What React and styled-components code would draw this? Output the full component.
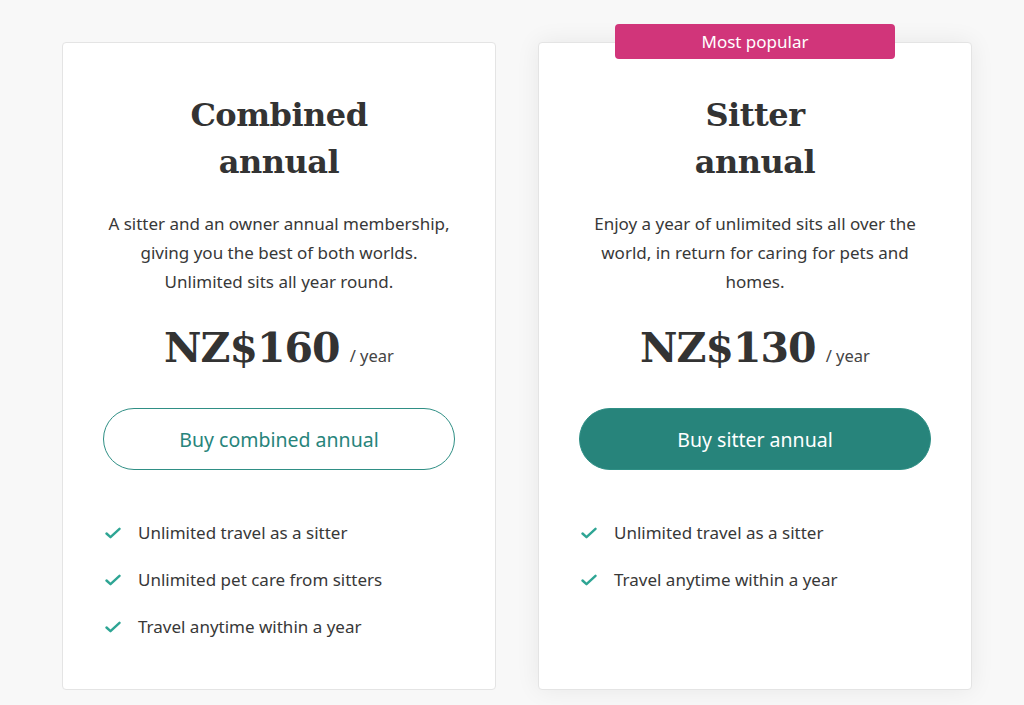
import React from 'react';
import styled, { createGlobalStyle } from 'styled-components';

const plans = [
  {
    title: ['Combined', 'annual'],
    description: ['A sitter and an owner annual membership,', 'giving you the best of both worlds.', 'Unlimited sits all year round.'],
    price: 'NZ$160',
    cta: 'Buy combined annual',
    features: ['Unlimited travel as a sitter', 'Unlimited pet care from sitters', 'Travel anytime within a year'],
  },
  {
    title: ['Sitter', 'annual'],
    description: ['Enjoy a year of unlimited sits all over the', 'world, in return for caring for pets and', 'homes.'],
    price: 'NZ$130',
    cta: 'Buy sitter annual',
    features: ['Unlimited travel as a sitter', 'Travel anytime within a year'],
    popular: true,
  },
];

const Check = () => (
  <svg width="16" height="12" viewBox="0 0 16 12" fill="none">
    <path d="M1.5 6.5 L5.5 10.2 L14.5 1.8" stroke="#2ea594" strokeWidth="2.4" strokeLinecap="round" strokeLinejoin="round" />
  </svg>
);

const App = () => {
  return (
    <>
      <GlobalStyle />
      <Page>
        {plans.map((plan) => (
          <Card key={plan.price} $popular={plan.popular}>
            {plan.popular && <Badge>Most popular</Badge>}
            <Title>
              {plan.title.map((line) => (
                <span key={line}>{line}</span>
              ))}
            </Title>
            <Description>
              {plan.description.map((line) => (
                <span key={line}>{line}</span>
              ))}
            </Description>
            <PriceRow>
              <Price>{plan.price}</Price>
              <Period>/ year</Period>
            </PriceRow>
            <BuyButton $primary={plan.popular}>{plan.cta}</BuyButton>
            <Features>
              {plan.features.map((feature) => (
                <Feature key={feature}>
                  <Check />
                  {feature}
                </Feature>
              ))}
            </Features>
          </Card>
        ))}
      </Page>
    </>
  );
};

export default App;

const GlobalStyle = createGlobalStyle`
  html, body {
    margin: 0;
    padding: 0;
    background: #f8f8f8;
  }
  body {
    font-family: 'Noto Sans', 'Open Sans', sans-serif;
    color: #333;
  }
`;

const Page = styled.div`
  display: flex;
  align-items: stretch;
  gap: 42px;
  padding: 42px 0 0 62px;
  height: 705px;
  box-sizing: border-box;
  overflow: hidden;
`;

const Card = styled.div`
  position: relative;
  width: 434px;
  height: 648px;
  box-sizing: border-box;
  background: #fff;
  border: 1px solid #e4e4e4;
  border-radius: 4px;
  padding: 49px 41px 0;
  display: flex;
  flex-direction: column;
  align-items: center;
  box-shadow: ${(p) => (p.$popular ? '0 0 24px rgba(0, 0, 0, 0.07)' : 'none')};
`;

const Badge = styled.div`
  position: absolute;
  top: -19px;
  left: 76px;
  width: 280px;
  height: 35px;
  border-radius: 4px;
  background: #d1357a;
  color: #fff;
  font-size: 17px;
  line-height: 35px;
  text-align: center;
`;

const Title = styled.h2`
  margin: 0;
  display: flex;
  flex-direction: column;
  align-items: center;
  font-family: 'DejaVu Serif', 'Liberation Serif', serif;
  font-weight: bold;
  font-size: 32px;
  line-height: 47px;
  color: #333;
  letter-spacing: -0.5px;
`;

const Description = styled.p`
  margin: 23px 0 0;
  display: flex;
  flex-direction: column;
  align-items: center;
  font-size: 17px;
  line-height: 29px;
  color: #383838;
  text-align: center;
`;

const PriceRow = styled.div`
  margin-top: 19px;
  display: flex;
  align-items: baseline;
  gap: 10px;
  height: 60px;
  padding-top: 3px;
  box-sizing: border-box;
`;

const Price = styled.span`
  font-family: 'DejaVu Serif', 'Liberation Serif', serif;
  font-weight: bold;
  font-size: 41px;
  line-height: 60px;
  letter-spacing: -1px;
  color: #333;
`;

const Period = styled.span`
  font-size: 16.5px;
  color: #444;
`;

const BuyButton = styled.button`
  margin-top: 33px;
  width: 352px;
  height: 62px;
  border-radius: 31px;
  border: 1.5px solid #2f8f85;
  background: ${(p) => (p.$primary ? '#27847b' : '#fff')};
  color: ${(p) => (p.$primary ? '#fff' : '#27847b')};
  font-family: 'Noto Sans', 'Open Sans', sans-serif;
  font-size: 19.5px;
  cursor: pointer;
`;

const Features = styled.ul`
  list-style: none;
  margin: 39px 0 0;
  padding: 0;
  align-self: stretch;
`;

const Feature = styled.li`
  display: flex;
  align-items: center;
  gap: 17px;
  height: 47px;
  padding-left: 1px;
  font-size: 17px;
  color: #383838;
`;
